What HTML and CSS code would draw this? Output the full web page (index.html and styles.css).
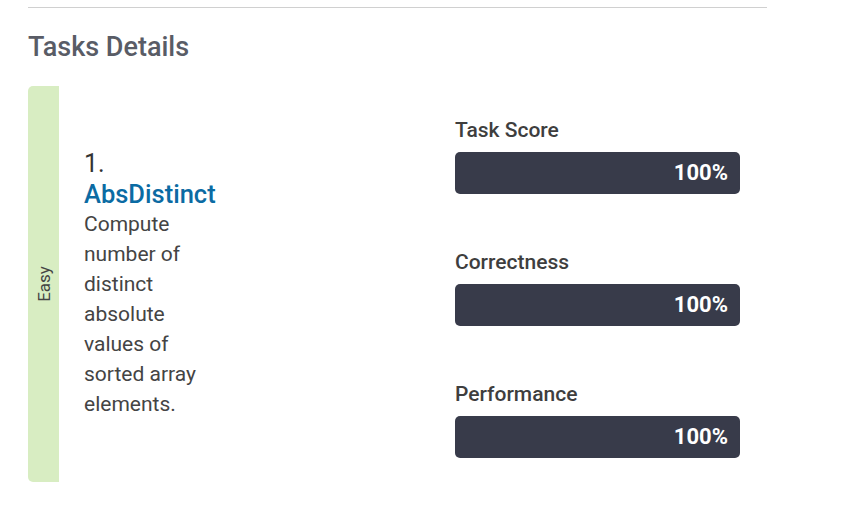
FILE: index.html
```html
<!DOCTYPE html>
<html>
<head>
<meta charset="utf-8">
<link rel="stylesheet" href="styles.css">
</head>
<body>
<div class="page">
  <div class="rule"></div>
  <h2 class="title">Tasks Details</h2>
  <div class="card">
    <div class="level"><span class="level-text">Easy</span></div>
    <div class="task">
      <div class="task-num">1.</div>
      <div class="task-name">AbsDistinct</div>
      <div class="task-desc">Compute number of distinct absolute values of sorted array elements.</div>
    </div>
    <div class="scores">
      <div class="score">
        <div class="score-label">Task Score</div>
        <div class="bar"><span>100%</span></div>
      </div>
      <div class="score">
        <div class="score-label">Correctness</div>
        <div class="bar"><span>100%</span></div>
      </div>
      <div class="score">
        <div class="score-label">Performance</div>
        <div class="bar"><span>100%</span></div>
      </div>
    </div>
  </div>
</div>
</body>
</html>
```
FILE: styles.css
```css
html, body {
  margin: 0;
  padding: 0;
  background: #fff;
  font-family: Roboto, "Liberation Sans", sans-serif;
}
.page {
  width: 739px;
  padding: 7px 0 0 28px;
}
.rule {
  border-top: 1px solid #d0d0d0;
}
.title {
  margin: 23px 0 0 0;
  font-size: 27px;
  line-height: 32px;
  font-weight: 500;
  color: #595c66;
}
.card {
  display: flex;
  margin-top: 23px;
  height: 396px;
}
.level {
  width: 31px;
  background: #d8edc2;
  border-radius: 5px 0 0 5px;
  display: flex;
  align-items: center;
  justify-content: center;
}
.level-text {
  transform: rotate(-90deg);
  font-size: 17px;
  color: #444;
  white-space: nowrap;
}
.task {
  width: 132px;
  margin-left: 25px;
  align-self: center;
  color: #444;
}
.task-num {
  font-size: 25px;
  line-height: 30px;
  color: #333;
}
.task-name {
  font-size: 25.5px;
  line-height: 30px;
  font-weight: 500;
  color: #0b6ba3;
}
.task-desc {
  font-size: 21px;
  line-height: 30px;
  color: #444;
}
.scores {
  margin-left: 239px;
  margin-top: 31px;
  width: 285px;
  align-self: flex-start;
  display: flex;
  flex-direction: column;
  gap: 55px;
}
.score-label {
  font-size: 21px;
  line-height: 26px;
  font-weight: 500;
  color: #3e3e3e;
  margin-bottom: 9px;
}
.bar {
  height: 42px;
  background: #383b4a;
  border-radius: 5px;
  display: flex;
  align-items: center;
  justify-content: flex-end;
  padding-right: 12px;
}
.bar span {
  color: #fff;
  font-size: 22px;
  font-weight: 700;
  line-height: 1;
  margin-top: -1px;
}
```
